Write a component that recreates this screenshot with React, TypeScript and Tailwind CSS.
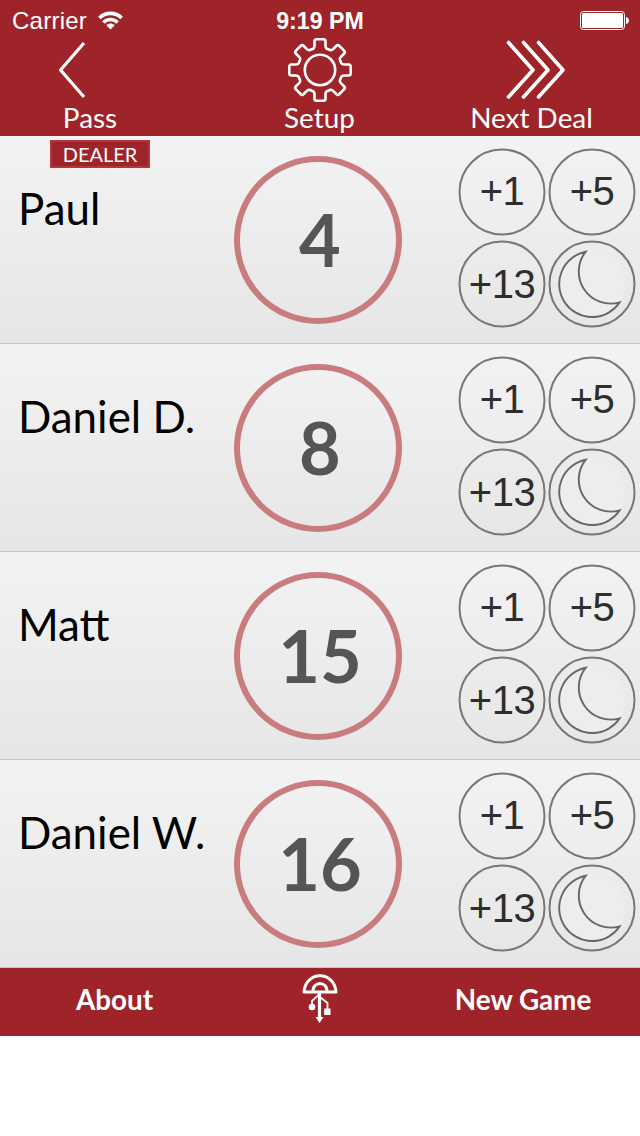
import type { ReactNode } from "react";

interface Player {
	name: string;
	score: number;
	dealer?: boolean;
}

const players: Player[] = [
	{ name: "Paul", score: 4, dealer: true },
	{ name: "Daniel D.", score: 8 },
	{ name: "Matt", score: 15 },
	{ name: "Daniel W.", score: 16 },
];

export default function App() {
	return (
		<div className="h-[1136px] w-[640px] overflow-hidden bg-white font-['Lato',sans-serif]">
			<header className="h-[136px] bg-[#9e2429] text-white">
				<StatusBar />
				<nav className="flex">
					<NavButton label="Pass" className="w-[180px]">
						<svg width="64" height="64" className="-ml-[42px]" fill="none" stroke="currentColor" strokeWidth="3.2">
							<path d="M47 5 23.500 32 47 59" strokeLinejoin="round" />
						</svg>
					</NavButton>
					<NavButton label="Setup" className="w-[279px]">
						<GearIcon />
					</NavButton>
					<NavButton label="Next Deal" className="w-[145px]">
						<svg width="64" height="64" className="ml-2" fill="none" stroke="currentColor" strokeWidth="3.6">
							<path
								d="M4.500 4.500 29 32 4.500 59M19.500 4.500 44 32 19.500 59M34.500 4.500 59 32 34.500 59"
								strokeLinecap="round"
								strokeLinejoin="round"
							/>
						</svg>
					</NavButton>
				</nav>
			</header>

			<main>
				{players.map((p) => (
					<PlayerRow key={p.name} player={p} />
				))}
			</main>

			<footer className="flex h-[68px] items-center bg-[#9e2429] text-[27.800px] font-bold text-white">
				<button type="button" className="w-[229px] pb-[5px]">
					About
				</button>
				<div className="flex w-[182px] justify-center">
					<UmbrellaIcon />
				</div>
				<button type="button" className="w-[224px] pb-[5px]">
					New Game
				</button>
			</footer>
		</div>
	);
}

function StatusBar() {
	return (
		<div className="flex h-[38px] items-center justify-between pr-3 pl-3 font-['Liberation_Sans',sans-serif] leading-10">
			<div className="flex w-[240px] items-center gap-[11px]">
				<span className="pt-[3px] text-[24px] tracking-[0.25px]">Carrier</span>
				<svg width="25" height="19" viewBox="0 0 25 19" className="mt-0.5" fill="none" stroke="currentColor" strokeWidth="3.6">
					<path d="M1.400 6.900C7.500 .8 17.500 .8 23.600 6.900M5.400 11.500C9.400 7.500 15.600 7.500 19.600 11.500" />
					<path d="M8.300 14.300C10.700 12 14.300 12 16.700 14.300L12.500 18.400Z" fill="currentColor" stroke="none" />
				</svg>
			</div>
			<span className="pt-[3px] text-[23.200px] font-bold">9:19 PM</span>
			<div className="flex w-[240px] justify-end pt-[3px]">
				<svg width="50" height="20" viewBox="-2 0 50 20" className="overflow-visible">
					<rect x="0.5" y="0.5" width="44" height="18" rx="3" fill="none" stroke="currentColor" />
					<rect x="2" y="2" width="41" height="15" rx="1.500" fill="currentColor" />
					<path d="M46 6c4 1 4 6 0 7z" fill="currentColor" />
				</svg>
			</div>
		</div>
	);
}

function NavButton({
	label,
	className,
	children,
}: {
	label: string;
	className: string;
	children: ReactNode;
}) {
	return (
		<button type="button" className={`flex flex-col items-center ${className}`}>
			{children}
			<span className="text-[27.900px] leading-[30px] whitespace-nowrap">{label}</span>
		</button>
	);
}

function PlayerRow({ player }: { player: Player }) {
	return (
		<section className="relative flex h-[208px] border-b border-[#c4c4c4] bg-linear-to-b from-[#f3f3f3] to-[#e6e6e6]">
			{player.dealer ? (
				<span className="absolute top-1 left-[50px] flex h-7 w-[100px] items-center justify-center border-2 border-[#b2383c] bg-[#9e2429] text-[20px] text-white">
					DEALER
				</span>
			) : null}
			<h2 className="w-[234px] pt-[45px] pl-[18px] text-[43.900px] leading-[54px] whitespace-nowrap text-black">
				{player.name}
			</h2>
			<div className="mt-5 flex size-[168px] items-center justify-center rounded-full border-6 border-[#c97c7e] pb-0.5 pl-1 text-[72px] font-bold text-[#555]">
				{player.score}
			</div>
			<div className="mt-3 ml-14 grid h-[180px] grid-cols-[88px_88px] gap-x-0.5 gap-y-1">
				<ScoreButton>
					<span className="pb-[3px]">+1</span>
				</ScoreButton>
				<ScoreButton>
					<span className="pb-[3px]">+5</span>
				</ScoreButton>
				<ScoreButton>+13</ScoreButton>
				<ScoreButton>
					<MoonIcon />
				</ScoreButton>
			</div>
		</section>
	);
}

// The outline is an svg circle so that it can sit on half pixels
function ScoreButton({ children }: { children: ReactNode }) {
	return (
		<button
			type="button"
			className="relative flex size-[88px] items-center justify-center rounded-full font-['Liberation_Sans',sans-serif] text-[40px] tracking-[-0.500px] text-[#2e2e2e]"
		>
			<svg width="88" height="88" className="absolute inset-0" fill="none" stroke="#777" strokeWidth="2">
				<circle cx="44" cy="44" r="42.500" />
			</svg>
			{children}
		</button>
	);
}

function MoonIcon() {
	return (
		<svg width="84" height="84" viewBox="-42 -42 84 84" className="relative shrink-0" fill="none" stroke="#666" strokeWidth="1.900">
			<circle r="33" fill="#ededed" stroke="none" />
			<path d="M-6.300 -32.300A33 33 0 1 0 27.700 18.300A32 32 0 0 1 -6.300 -32.300Z" />
		</svg>
	);
}

// One tooth, repeated every 45 degrees
const TOOTH =
	"M-9.200 -20.800C-7.500 -20.500 -5.500 -21.500 -5.500 -24V-28.500Q-5.500 -30.700 -3.300 -30.700H3.300Q5.500 -30.700 5.500 -28.500V-24C5.500 -21.500 7.500 -20.500 9.200 -20.800";

function GearIcon() {
	return (
		<svg width="64" height="64" viewBox="-32 -32 64 64" className="ml-px" fill="none" stroke="currentColor" strokeWidth="2.600">
			<circle r="15.200" />
			{[0, 45, 90, 135, 180, 225, 270, 315].map((deg) => (
				<path key={deg} d={TOOTH} transform={`rotate(${deg})`} />
			))}
		</svg>
	);
}

function UmbrellaIcon() {
	return (
		<svg width="36" height="50" viewBox="0 0 36 50" className="mb-[7px]" fill="none" stroke="currentColor" strokeWidth="3">
			<path d="M2 18C2.500 9 9 1.700 18 1.700S33.500 9 34 18Z" strokeLinejoin="round" />
			<path d="M11 18C10.500 6.500 25.500 6.500 25 18" />
			<path d="M17.500 18V44" strokeWidth="3.200" />
			<path d="M17.500 20 10 27V32M18 23 25.500 29V35" strokeWidth="1.800" />
			<path d="M13.500 43H21.500L17.500 49Z" fill="currentColor" stroke="none" />
			<circle cx="10" cy="33" r="3.300" fill="currentColor" stroke="none" />
			<rect x="22.200" y="34.500" width="6.300" height="6.500" fill="currentColor" stroke="none" />
		</svg>
	);
}
